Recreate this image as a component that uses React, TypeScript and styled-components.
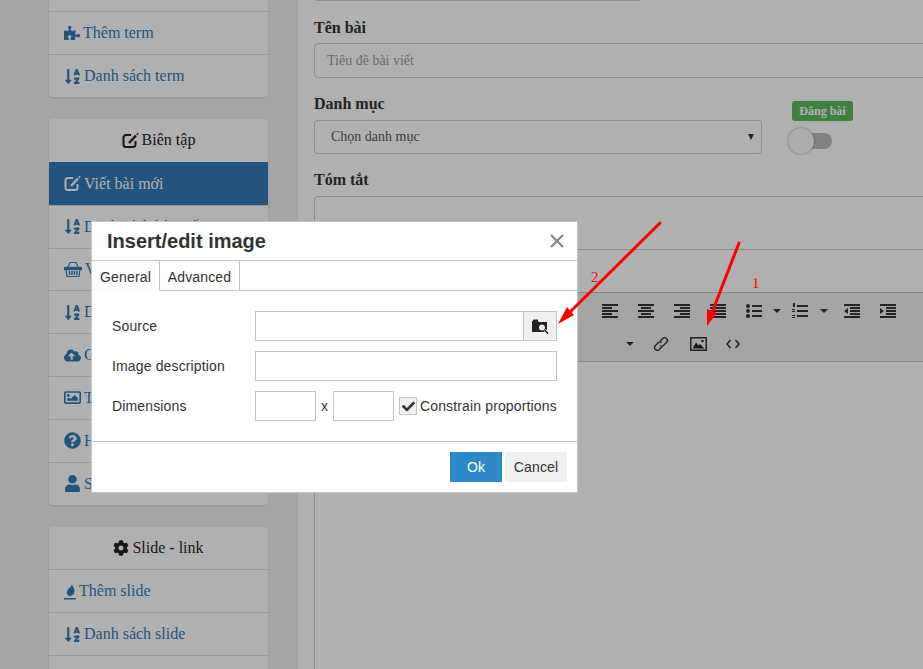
import React from 'react';
import styled, { createGlobalStyle } from 'styled-components';
import {
    FaPuzzlePiece,
    FaSortAlphaDown,
    FaCloudUploadAlt,
    FaRegImage,
    FaQuestionCircle,
    FaUser,
    FaCog,
    FaCheck,
} from 'react-icons/fa';

const GlobalStyle = createGlobalStyle`
    html, body {
        margin: 0;
        padding: 0;
        background: #fff;
    }
    * {
        box-sizing: border-box;
    }
`;

const Page = styled.div`
    position: relative;
    display: flex;
    width: 923px;
    height: 669px;
    overflow: hidden;
    font-family: "Liberation Serif", serif;
    font-size: 16px;
    color: #333;
`;

const Sidebar = styled.aside`
    flex: 0 0 298px;
    padding: 0 30px 0 49px;
    background: #f0f0f0;
    display: flex;
    flex-direction: column;
    gap: 22px;
`;

const Panel = styled.div<{ $cut?: boolean }>`
    flex: none;
    display: flex;
    flex-direction: column;
    background: #fff;
    border-radius: 4px;
    box-shadow: 0 1px 2px rgba(0, 0, 0, 0.12);
    margin-top: ${(props) => (props.$cut ? '-31.55px' : '0')};
`;

const PanelHead = styled.div`
    flex: none;
    height: 42.85px;
    display: flex;
    align-items: center;
    justify-content: center;
    gap: 3px;
    color: #222;
    svg {
        font-size: 16px;
    }
`;

const Row = styled.div<{ $active?: boolean }>`
    flex: none;
    height: 42.85px;
    display: flex;
    align-items: center;
    gap: 3px;
    padding-left: 15px;
    white-space: nowrap;
    overflow: hidden;
    color: ${(props) => (props.$active ? '#fff' : '#337ab7')};
    background: ${(props) => (props.$active ? '#337ab7' : '#fff')};
    border-top: 1px solid ${(props) => (props.$active ? '#337ab7' : '#ddd')};
    &:first-child {
        border-top: 0;
    }
    &:last-child {
        border-radius: 0 0 4px 4px;
    }
    svg {
        flex: none;
        font-size: 17px;
    }
`;

const Main = styled.main`
    flex: 1;
    min-width: 0;
    padding-left: 16px;
    background: #fff;
    display: flex;
    flex-direction: column;
`;

const TopStub = styled.div`
    flex: none;
    width: 328px;
    height: 34px;
    margin-top: -33px;
    border: 1px solid #ccc;
    border-radius: 4px;
`;

const Label = styled.label`
    display: block;
    height: 20px;
    line-height: 20px;
    font-weight: bold;
    font-size: 16px;
    color: #333;
`;

const NameLabel = styled(Label)`
    margin-top: 17px;
    margin-bottom: 5px;
`;

const FieldLabel = styled(Label)`
    margin-top: 16px;
    margin-bottom: 6px;
`;

const TextInput = styled.div`
    flex: none;
    width: 640px;
    height: 35px;
    display: flex;
    align-items: center;
    padding-left: 12px;
    font-size: 14px;
    color: #999;
    border: 1px solid #ccc;
    border-radius: 4px;
`;

const CategoryRow = styled.div`
    display: flex;
    gap: 26px;
    align-items: flex-start;
    height: 34px;
`;

const Select = styled.div`
    width: 448px;
    height: 34px;
    display: flex;
    align-items: center;
    justify-content: space-between;
    padding: 0 7px 0 16px;
    font-size: 14px;
    color: #555;
    border: 1px solid #ccc;
    border-radius: 4px;
`;

const Caret = styled.span`
    width: 0;
    height: 0;
    border-left: 3px solid transparent;
    border-right: 3px solid transparent;
    border-top: 6px solid #333;
`;

const PublishBox = styled.div`
    display: flex;
    flex-direction: column;
    gap: 7px;
    margin-top: -19px;
`;

const Badge = styled.span`
    width: 61px;
    height: 20px;
    margin-left: 4px;
    display: flex;
    align-items: center;
    justify-content: center;
    font-size: 12px;
    font-weight: bold;
    color: #fff;
    background: #5cb85c;
    border-radius: 3px;
`;

const Switch = styled.div`
    position: relative;
    width: 44px;
    height: 26px;
    display: flex;
    align-items: center;
    justify-content: flex-end;
    &::before {
        content: '';
        width: 32px;
        height: 16px;
        border-radius: 8px;
        background: #bdbdbd;
    }
    &::after {
        content: '';
        position: absolute;
        left: 0;
        top: 0;
        width: 26px;
        height: 26px;
        border-radius: 50%;
        background: #fafafa;
        box-shadow: 0 0 2px rgba(0, 0, 0, 0.5);
    }
`;

const Summary = styled.div`
    flex: none;
    width: 640px;
    height: 54px;
    border: 1px solid #ccc;
    border-radius: 4px;
`;

const Editor = styled.div`
    flex: 1;
    margin-top: 42px;
    width: 640px;
    border: 1px solid #c5c5c5;
    border-bottom: 0;
`;

const Toolbar = styled.div`
    height: 69px;
    background: #f0f0f0;
    border-bottom: 1px solid #c5c5c5;
    padding: 1px 0 0 277px;
    display: flex;
    flex-direction: column;
`;

const ToolRow = styled.div<{ $indent?: number }>`
    height: 33px;
    display: flex;
    align-items: center;
    margin-left: ${(props) => props.$indent ?? 0}px;
`;

const Tool = styled.span<{ $w?: number }>`
    flex: none;
    width: ${(props) => props.$w ?? 36}px;
    display: flex;
    justify-content: center;
`;

const ToolCaret = styled.span`
    width: 0;
    height: 0;
    border-left: 4px solid transparent;
    border-right: 4px solid transparent;
    border-top: 4px solid #333;
`;

const Overlay = styled.div`
    position: absolute;
    inset: 0;
    background: rgba(0, 0, 0, 0.31);
`;

const Dialog = styled.div`
    position: absolute;
    left: 91px;
    top: 221px;
    width: 487px;
    height: 272px;
    background: #fff;
    border: 1px solid #c5c5c5;
    font-family: "Liberation Sans", Arial, sans-serif;
    font-size: 14px;
    letter-spacing: 0.14px;
    color: #333;
    display: flex;
    flex-direction: column;
`;

const DialogHead = styled.div`
    flex: none;
    height: 39px;
    display: flex;
    align-items: center;
    justify-content: space-between;
    padding: 0 13px 0 15px;
    border-bottom: 1px solid #c5c5c5;
`;

const DialogTitle = styled.h1`
    margin: 0;
    font-size: 20px;
    font-weight: bold;
    letter-spacing: 0;
    color: #333;
`;

const Tabs = styled.div`
    flex: none;
    height: 30px;
    display: flex;
    border-bottom: 1px solid #c5c5c5;
`;

const Tab = styled.div<{ $active?: boolean; $w: number }>`
    width: ${(props) => props.$w}px;
    height: ${(props) => (props.$active ? '30px' : '29px')};
    padding-top: 2px;
    display: flex;
    align-items: center;
    justify-content: center;
    background: ${(props) => (props.$active ? '#fdfdfd' : '#fff')};
    border-right: 1px solid #c5c5c5;
`;

const DialogBody = styled.div`
    flex: 1;
    padding: 20px 20px 0 20px;
    display: flex;
    flex-direction: column;
    gap: 10px;
    border-bottom: 1px solid #c5c5c5;
`;

const FormRow = styled.div`
    display: flex;
    align-items: center;
    height: 30px;
`;

const FormLabel = styled.span`
    flex: 0 0 143px;
    padding-bottom: 1px;
`;

const Box = styled.div<{ $w: number }>`
    flex: none;
    width: ${(props) => props.$w}px;
    height: 30px;
    border: 1px solid #c5c5c5;
`;

const BrowseButton = styled.div`
    flex: none;
    width: 34px;
    height: 30px;
    margin-left: -1px;
    display: flex;
    align-items: center;
    justify-content: center;
    background: #f0f0f0;
    border: 1px solid #c5c5c5;
`;

const Times = styled.span`
    width: 17px;
    text-align: center;
`;

const CheckBox = styled.span`
    flex: none;
    width: 18px;
    height: 18px;
    margin: 0 3px 0 5px;
    display: flex;
    align-items: center;
    justify-content: center;
    background: #f0f0f0;
    border: 1px solid #c5c5c5;
    font-size: 13px;
`;

const DialogFoot = styled.div`
    flex: none;
    height: 50px;
    display: flex;
    justify-content: flex-end;
    align-items: center;
    gap: 3px;
    padding: 0 10px 0 0;
`;

const Button = styled.div<{ $primary?: boolean; $w: number }>`
    width: ${(props) => props.$w}px;
    height: 30px;
    display: flex;
    align-items: center;
    justify-content: center;
    color: ${(props) => (props.$primary ? '#fff' : '#333')};
    background: ${(props) => (props.$primary ? '#2d8ac7' : '#f0f0f0')};
`;

const Marks = styled.svg`
    position: absolute;
    inset: 0;
    width: 923px;
    height: 669px;
    pointer-events: none;
`;

const Mark = styled.text`
    font-family: "Liberation Serif", serif;
    font-size: 15px;
    fill: #ff0000;
`;

const Close = styled.span`
    display: flex;
`;

// TinyMCE toolbar glyphs: each row is [x, width]
const lineIcons: Record<string, number[][]> = {
    left: [[0, 16], [0, 10], [0, 16], [0, 10], [0, 16]],
    center: [[0, 16], [3, 10], [0, 16], [3, 10], [0, 16]],
    right: [[0, 16], [6, 10], [0, 16], [6, 10], [0, 16]],
    justify: [[0, 16], [0, 16], [0, 16], [0, 16], [0, 16]],
};

const LinesIcon: React.FC<{ kind: string }> = ({ kind }) => (
    <svg width="16" height="14" viewBox="0 0 16 14" fill="#333">
        {lineIcons[kind].map(([x, w], i) => (
            <rect key={i} x={x} y={i * 3} width={w} height="2" />
        ))}
    </svg>
);

const BulletIcon = () => (
    <svg width="16" height="14" viewBox="0 0 16 14" fill="#333">
        <circle cx="2" cy="2" r="2" />
        <circle cx="2" cy="7" r="2" />
        <circle cx="2" cy="12" r="2" />
        <rect x="6" y="1" width="10" height="2" />
        <rect x="6" y="6" width="10" height="2" />
        <rect x="6" y="11" width="10" height="2" />
    </svg>
);

const NumberIcon = () => (
    <svg width="16" height="16" viewBox="0 0 16 16" fill="#333">
        <rect x="1" y="0" width="2" height="4" />
        <rect x="0" y="6" width="3" height="1" />
        <rect x="0" y="8" width="3" height="1" />
        <rect x="0" y="12" width="3" height="1" />
        <rect x="0" y="14" width="3" height="1" />
        <rect x="5" y="2" width="11" height="2" />
        <rect x="5" y="7" width="11" height="2" />
        <rect x="5" y="12" width="11" height="2" />
    </svg>
);

const IndentIcon: React.FC<{ out?: boolean }> = ({ out }) => (
    <svg width="16" height="14" viewBox="0 0 16 14" fill="#333">
        <rect x="0" y="0" width="16" height="2" />
        <rect x="6" y="3" width="10" height="2" />
        <rect x="6" y="6" width="10" height="2" />
        <rect x="6" y="9" width="10" height="2" />
        <rect x="0" y="12" width="16" height="2" />
        {out ? <path d="M4 4v6L0 7z" /> : <path d="M0 4v6l4-3z" />}
    </svg>
);

const LinkIcon = () => (
    <svg width="16" height="16" viewBox="0 0 16 16" fill="none" stroke="#333" strokeWidth="1.4">
        <path d="M7 5.500l2.600-3a2.500 2.500 0 0 1 3.600-.2l.5.5a2.500 2.500 0 0 1 0 3.500l-3 3a2.500 2.500 0 0 1-3.300.2" />
        <path d="M9 10.500l-2.600 3a2.500 2.500 0 0 1-3.600.2l-.5-.5a2.500 2.500 0 0 1 0-3.500l3-3a2.500 2.500 0 0 1 3.300-.2" />
    </svg>
);

const ImageIcon = () => (
    <svg width="17" height="14" viewBox="0 0 17 14">
        <rect x="0.750" y="0.750" width="15.500" height="12.500" fill="none" stroke="#333" strokeWidth="1.500" />
        <path d="M2.500 11.500l3.500-6 2.500 3 1.500-1.500 4.500 4.500z" fill="#222" />
        <circle cx="12.500" cy="4" r="1.200" fill="#222" />
    </svg>
);

const CodeIcon = () => (
    <svg width="14" height="10" viewBox="0 0 14 10" fill="none" stroke="#333" strokeWidth="1.600">
        <path d="M4.500 1L1 5l3.500 4" />
        <path d="M9.500 1L13 5l-3.500 4" />
    </svg>
);

const BrowseIcon = () => (
    <svg width="17" height="15" viewBox="0 0 17 15">
        <path d="M0 2h6l1 1h8v10H0z" fill="#222" />
        <rect x="1" y="0.500" width="5" height="1.500" fill="#222" />
        <circle cx="10" cy="8.500" r="3.600" fill="#e8e8e8" stroke="#222" strokeWidth="1.300" />
        <path d="M12.500 11l3.500 3.500" stroke="#f0f0f0" strokeWidth="3" />
        <path d="M12.500 11l3.500 3.500" stroke="#222" strokeWidth="1.600" />
    </svg>
);

const EditIcon = () => (
    <svg width="17" height="17" viewBox="0 0 17 17" fill="none" stroke="currentColor">
        <path d="M9 3H4a2.500 2.500 0 0 0-2.500 2.500v7A2.500 2.500 0 0 0 4 15h7a2.500 2.500 0 0 0 2.500-2.500V9" strokeWidth="2" />
        <path d="M7 11l7-7.500" strokeWidth="2.400" />
        <path d="M15 1.500l1 1" strokeWidth="2" />
    </svg>
);

const BasketIcon = () => (
    <svg width="18" height="17" viewBox="0 0 18 17" fill="none" stroke="currentColor" strokeWidth="1.200">
        <path d="M3.500 7l2-4.500a1.500 1.500 0 0 1 1.400-1h4.200a1.500 1.500 0 0 1 1.400 1l2 4.500" />
        <rect x="0.500" y="6.500" width="17" height="2" fill="currentColor" />
        <path d="M2 8.500l1 7h12l1-7" />
        <path d="M5.500 10v4M8 10v4M10.500 10v4M13 10v4" strokeWidth="1.400" />
    </svg>
);

const QuillIcon = () => (
    <svg width="12" height="17" viewBox="0 0 12 17" fill="#337ab7">
        <path d="M8 1c.3 2.500 2.500 4 2.500 7 0 2.800-2 5-4.700 5C3.800 13 2.500 11 3 8.500 3.600 5.500 7.500 4 8 1z" />
        <rect x="0" y="15" width="12" height="1.500" />
    </svg>
);

const CloseIcon = () => (
    <svg width="14" height="14" viewBox="0 0 14 14" stroke="#858585" strokeWidth="2.200">
        <path d="M1 1l12 12M13 1L1 13" />
    </svg>
);

const App: React.FC = () => (
    <Page>
        <GlobalStyle />
        <Sidebar>
            <Panel $cut>
                <Row>&nbsp;</Row>
                <Row><FaPuzzlePiece size={16} />Thêm term</Row>
                <Row><FaSortAlphaDown />Danh sách term</Row>
            </Panel>
            <Panel>
                <PanelHead><EditIcon />Biên tập</PanelHead>
                <Row $active><EditIcon />Viết bài mới</Row>
                <Row><FaSortAlphaDown />Danh sách bài viết</Row>
                <Row><BasketIcon />Viết sản phẩm</Row>
                <Row><FaSortAlphaDown />Danh sách sản phẩm</Row>
                <Row><FaCloudUploadAlt />Cập nhật</Row>
                <Row><FaRegImage />Thư viện</Row>
                <Row><FaQuestionCircle />Hướng dẫn</Row>
                <Row><FaUser />Soạn giả</Row>
            </Panel>
            <Panel>
                <PanelHead><FaCog />Slide - link</PanelHead>
                <Row><QuillIcon />Thêm slide</Row>
                <Row><FaSortAlphaDown />Danh sách slide</Row>
                <Row><FaSortAlphaDown />&nbsp;</Row>
            </Panel>
        </Sidebar>
        <Main>
            <TopStub />
            <NameLabel>Tên bài</NameLabel>
            <TextInput>Tiêu đề bài viết</TextInput>
            <FieldLabel>Danh mục</FieldLabel>
            <CategoryRow>
                <Select>Chọn danh mục<Caret /></Select>
                <PublishBox>
                    <Badge>Đăng bài</Badge>
                    <Switch />
                </PublishBox>
            </CategoryRow>
            <FieldLabel>Tóm tắt</FieldLabel>
            <Summary />
            <Editor>
                <Toolbar>
                    <ToolRow>
                        <Tool><LinesIcon kind="left" /></Tool>
                        <Tool><LinesIcon kind="center" /></Tool>
                        <Tool><LinesIcon kind="right" /></Tool>
                        <Tool><LinesIcon kind="justify" /></Tool>
                        <Tool><BulletIcon /></Tool>
                        <Tool $w={10}><ToolCaret /></Tool>
                        <Tool><NumberIcon /></Tool>
                        <Tool $w={12}><ToolCaret /></Tool>
                        <Tool $w={44}><IndentIcon out /></Tool>
                        <Tool $w={28}><IndentIcon /></Tool>
                    </ToolRow>
                    <ToolRow $indent={24}>
                        <Tool $w={28}><ToolCaret /></Tool>
                        <Tool $w={34}><LinkIcon /></Tool>
                        <Tool $w={40}><ImageIcon /></Tool>
                        <Tool $w={30}><CodeIcon /></Tool>
                    </ToolRow>
                </Toolbar>
            </Editor>
        </Main>
        <Overlay />
        <Dialog>
            <DialogHead>
                <DialogTitle>Insert/edit image</DialogTitle>
                <Close><CloseIcon /></Close>
            </DialogHead>
            <Tabs>
                <Tab $active $w={68}>General</Tab>
                <Tab $w={80}>Advanced</Tab>
            </Tabs>
            <DialogBody>
                <FormRow>
                    <FormLabel>Source</FormLabel>
                    <Box $w={269} />
                    <BrowseButton><BrowseIcon /></BrowseButton>
                </FormRow>
                <FormRow>
                    <FormLabel>Image description</FormLabel>
                    <Box $w={302} />
                </FormRow>
                <FormRow>
                    <FormLabel>Dimensions</FormLabel>
                    <Box $w={61} />
                    <Times>x</Times>
                    <Box $w={61} />
                    <CheckBox><FaCheck /></CheckBox>
                    Constrain proportions
                </FormRow>
            </DialogBody>
            <DialogFoot>
                <Button $primary $w={52}>Ok</Button>
                <Button $w={62}>Cancel</Button>
            </DialogFoot>
        </Dialog>
        <Marks viewBox="0 0 923 669">
            <g stroke="#ff0000" strokeLinecap="round">
                <path d="M660 223L570 312" strokeWidth="3" />
                <path d="M739 243L713 310" strokeWidth="3" />
            </g>
            <path d="M558 324L567 307L574 315z" fill="#ff0000" />
            <path d="M707 326L707 309L717 313z" fill="#ff0000" />
            <Mark x="591" y="282">2</Mark>
            <Mark x="752" y="288">1</Mark>
        </Marks>
    </Page>
);

export default App;
